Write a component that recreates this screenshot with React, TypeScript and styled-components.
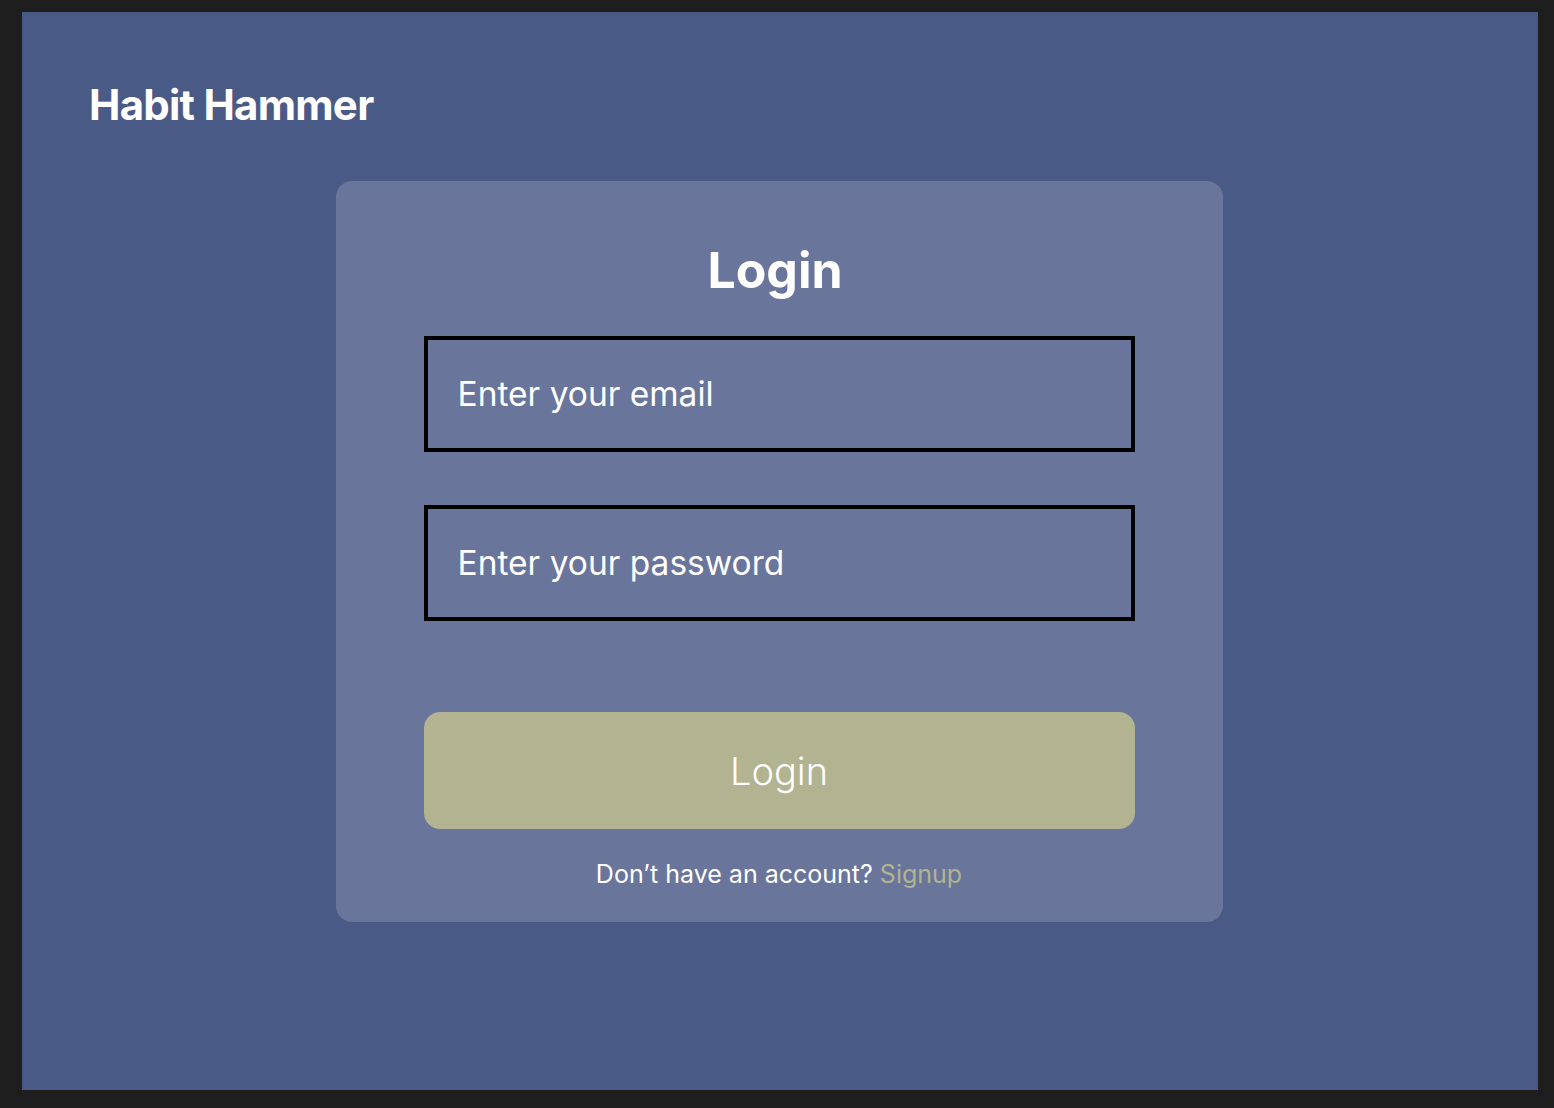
import React from "react";
import styled, { createGlobalStyle } from "styled-components";

const Global = createGlobalStyle`
  html, body { margin: 0; padding: 0; background: #1e1e1e; }
  body { font-family: Inter, "Noto Sans", sans-serif; }
  * { box-sizing: border-box; }
`;

const Outer = styled.div`
  padding: 12px 16px 18px 22px;
  background: #1e1e1e;
  min-height: 1108px;
`;

const Frame = styled.main`
  background: #4a5a87;
  height: 1078px;
  padding: 72px 0 0 67px;
  display: flex;
  flex-direction: column;
`;

const Brand = styled.h1`
  margin: 0;
  font-size: 42px;
  line-height: 1;
  font-weight: 700;
  color: #ffffff;
  letter-spacing: -0.75px;
`;

const Center = styled.div`
  display: flex;
  justify-content: center;
  padding-right: 69px;
  margin-top: 55px;
`;

const Card = styled.form`
  width: 887px;
  background: #6a759b;
  border-radius: 16px;
  padding: 64px 88px 35px;
  display: flex;
  flex-direction: column;
  align-items: stretch;
`;

const Title = styled.h2`
  margin: 0 0 41px;
  text-align: center;
  font-size: 50px;
  line-height: 1;
  font-weight: 700;
  color: #ffffff;
  padding-right: 8px;
`;

const Field = styled.input<{ $gap: number }>`
  display: block;
  width: 100%;
  height: 116px;
  border: 4px solid #000000;
  background: transparent;
  padding: 0 0 0 30px;
  margin: 0 0 ${(p) => p.$gap}px;
  font-family: Inter, "Noto Sans", sans-serif;
  font-size: 33.5px;
  color: #ffffff;
  outline: none;
  &::placeholder { color: #ffffff; opacity: 1; }
`;

const Button = styled.button`
  height: 117px;
  width: 100%;
  border: none;
  border-radius: 16px;
  background: #b1b391;
  color: #ffffff;
  font-family: Inter, "Noto Sans", sans-serif;
  font-size: 38px;
  font-weight: 300;
  cursor: pointer;
`;

const Footer = styled.p`
  margin: 33px 0 0;
  text-align: center;
  font-size: 25px;
  line-height: 1;
  color: #ffffff;
`;

const Link = styled.a`
  color: #b1b391;
  text-decoration: none;
`;

export default function App() {
  return (
    <>
      <Global />
      <Outer>
        <Frame>
          <Brand>Habit Hammer</Brand>
          <Center>
            <Card onSubmit={(e) => e.preventDefault()}>
              <Title>Login</Title>
              <Field $gap={53} type="email" placeholder="Enter your email" />
              <Field $gap={91} type="password" placeholder="Enter your password" />
              <Button type="submit">Login</Button>
              <Footer>
                Don’t have an account? <Link href="#">Signup</Link>
              </Footer>
            </Card>
          </Center>
        </Frame>
      </Outer>
    </>
  );
}
